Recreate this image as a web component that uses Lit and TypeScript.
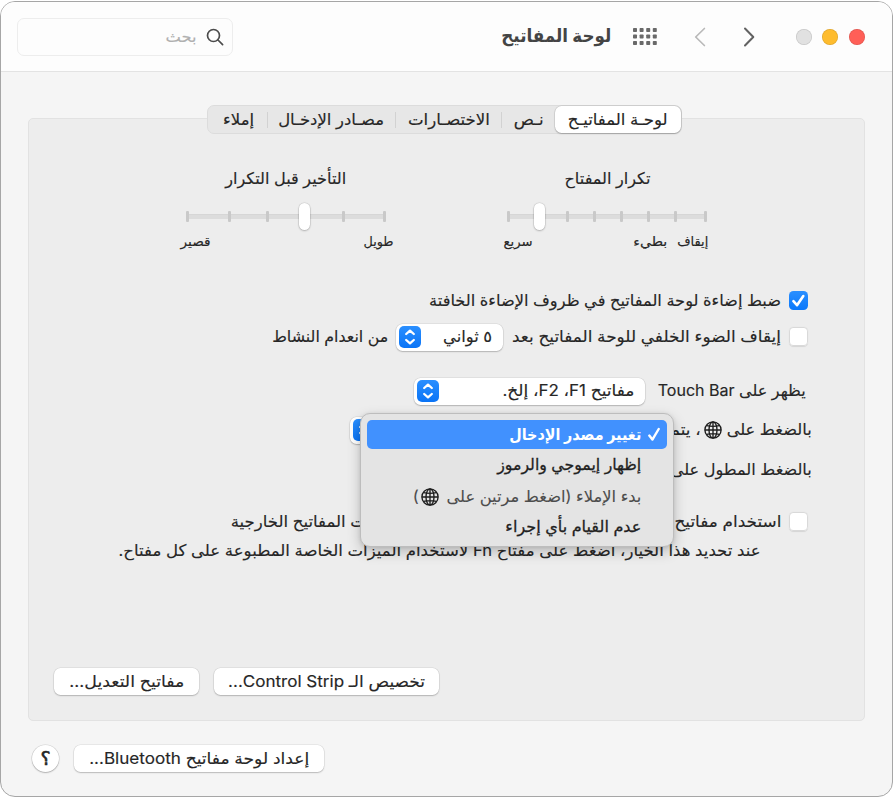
import { LitElement, html, svg, css, nothing } from "lit";
import { customElement, property, query } from "lit/decorators.js";

/** One line of text condensed or widened to a given measure. */
@customElement("fit-text")
class FitText extends LitElement {
  @property({ type: Number }) w = 100;
  @query("span") private line!: HTMLSpanElement;
  static styles = css`
    :host { display: block; flex: none; direction: rtl; padding-bottom: 2px; }
    span { display: inline-block; white-space: nowrap; transform-origin: 100% 50%; }
  `;
  updated() {
    this.style.width = `${this.w}px`;
    this.line.style.transform = "none";
    const natural = this.line.getBoundingClientRect().width;
    if (natural) this.line.style.transform = `scaleX(${this.w / natural})`;
  }
  render() {
    return html`<span><slot></slot></span>`;
  }
}

@customElement("key-slider")
class KeySlider extends LitElement {
  @property({ attribute: false }) ticks: number[] = [];
  @property({ type: Number }) value = 0;
  static styles = css`
    :host { display: block; direction: ltr; }
    .track { position: relative; height: 5px; width: 199px; margin-left: 1px; background: #dcdcdc; box-shadow: inset 0 1px 0 #d6d6d6; }
    .tick { position: absolute; top: -3px; width: 3px; height: 11px; margin-left: -1px; border-radius: 1px; background: #c9c9c9; }
    .thumb { position: absolute; top: -11px; width: 11px; height: 27px; margin-left: -1px; border-radius: 6px; background: #fff; box-shadow: 0 0 1px 0.5px rgba(0,0,0,.14), 0 1px 2px rgba(0,0,0,.2); }
  `;
  render() {
    return html`<div class="track">
      ${this.ticks.map((t) => html`<i class="tick" style="left:${t}px"></i>`)}
      <i class="thumb" style="left:${this.value}px"></i>
    </div>`;
  }
}

@customElement("check-box")
class CheckBox extends LitElement {
  @property({ type: Boolean }) checked = false;
  static styles = css`
    :host { display: block; flex: none; }
    .box { width: 19px; height: 19px; border-radius: 4.5px; background: #fff; box-shadow: inset 0 0 0 1px #d9d9d9, 0 .5px 1px rgba(0,0,0,.1); }
    .on { background: linear-gradient(#2a8fff, #0a78fb); box-shadow: none; }
    svg { display: block; }
  `;
  render() {
    return html`<div class="box ${this.checked ? "on" : ""}">
      ${this.checked
        ? html`<svg width="19" height="19" viewBox="0 0 19 19" fill="none" stroke="#fff" stroke-width="2.6" stroke-linecap="round" stroke-linejoin="round"><path d="M4.4 10.2 8 14.2 14.3 5"/></svg>`
        : nothing}
    </div>`;
  }
}

@customElement("pop-up")
class PopUp extends LitElement {
  static styles = css`
    :host { display: flex; flex: none; box-sizing: border-box; height: 27px; align-items: center; padding: 0 11px 0 3px; border-radius: 6.5px; background: #fff; direction: rtl; box-shadow: 0 0 0 .5px rgba(0,0,0,.1), 0 1px 1.5px rgba(0,0,0,.2); }
    .arrows { width: 22px; height: 22px; flex: none; margin-right: auto; border-radius: 5px; background: linear-gradient(#2a8fff, #0a74f6); }
  `;
  render() {
    return html`<slot></slot>
      <svg class="arrows" viewBox="0 0 22 22" fill="none" stroke="#fff" stroke-width="2.3" stroke-linecap="round" stroke-linejoin="round"><path d="M7.2 8 11 4.7 14.8 8M7.2 14l3.8 3.3 3.8-3.3"/></svg>`;
  }
}

const globe = html`<svg class="globe" width="18" height="18" viewBox="0 0 18 18" fill="none" stroke="currentColor" stroke-width="1.35">
  <circle cx="9" cy="9" r="8.1"/><ellipse cx="9" cy="9" rx="4" ry="8.1"/>
  <path d="M9 .9v16.2M.9 9h16.2M2.6 4.6q6.4 1.6 12.8 0M2.6 13.4q6.4-1.6 12.8 0"/></svg>`;

const dots = [0, 1, 2].flatMap((r) =>
  [0, 1, 2, 3].map((c) => svg`<rect x=${c * 6.6} y=${r * 6.5} width="4" height="4" rx=".8"/>`)
);

@customElement("app-root")
class AppRoot extends LitElement {
  static styles = css`
    :host { display: block; width: 894px; height: 798px; overflow: hidden; background: #fff; padding-top: 1px; box-sizing: border-box; direction: rtl; font: 16px/24px Inter, "DejaVu Sans", sans-serif; color: #262626; -webkit-text-stroke: .15px currentColor; }
    * { box-sizing: border-box; }
    .window { width: 893px; height: 796px; margin-left: auto; margin-right: 1px; border: 1px solid #a6a6a6; border-radius: 15px; background: #f5f5f5; overflow: hidden; direction: rtl; }
    .bar { height: 70px; background: #fdfdfd; border-bottom: 1.5px solid #e3e3e3; display: flex; align-items: center; padding: 0 27px 0 16px; }
    .dot { width: 16px; height: 16px; border-radius: 50%; margin-left: 10.6px; box-shadow: inset 0 0 0 .7px rgba(0,0,0,.12); }
    .red { background: #ff5f57; } .yellow { background: #febc2e; } .grey { background: #e1e1e1; }
    .next { margin-right: 30px; } .prev { margin-right: 37.5px; } .grid { margin: 0 36.5px 0 22px; }
    .title { font-size: 18px; font-weight: 600; color: #444; -webkit-text-stroke: 0; }
    .search { margin-right: auto; width: 216px; height: 38px; border: 1.5px solid #ededed; border-radius: 7px; display: flex; align-items: center; padding-right: 8px; }
    .search fit-text { margin-right: 9px; padding: 0; color: #b0b0b0; font-size: 15px; }
    .tabs { position: relative; z-index: 1; width: 475px; height: 29px; margin: 33px 210px -16px auto; border: 1px solid #dcdcdc; border-radius: 7px; background: #e7e7e7; display: flex; align-items: center; }
    .tab { display: flex; height: 27px; justify-content: center; align-items: center; }
    .tab.on { background: #fff; border-radius: 6.5px; box-shadow: 0 0 0 .5px rgba(0,0,0,.13), 0 1px 1.5px rgba(0,0,0,.22); }
    .sep { width: 1px; height: 16px; background: #d2d2d2; }
    .panel { position: relative; width: 837px; height: 603px; margin: 0 27px 0 auto; border: 1px solid #e2e2e2; border-radius: 5px; background: #ededed; }
    .sliders { display: flex; padding: 47px 155px 0 0; gap: 119px; height: 168px; }
    .sliders fit-text { padding: 0; }
    .sl { width: 202px; }
    .sl .head { display: flex; }
    .sl key-slider { margin-top: 24px; }
    .names { display: flex; margin-top: 10px; font-size: 13px; }
    .row { display: flex; align-items: center; height: 28px; }
    .lit { padding-right: 56px; }
    .row check-box { margin: 0 0 1px 8px; }
    .menu { position: absolute; left: 331px; top: 294px; width: 314px; height: 134px; padding: 6px 6px; border: 1px solid #bdbdbd; border-radius: 10px; background: #e4e4e4; box-shadow: 0 5px 14px rgba(0,0,0,.2), 0 1px 4px rgba(0,0,0,.1); color: #1f1f1f; -webkit-text-stroke: .3px currentColor; }
    .item { display: flex; align-items: center; height: 31px; padding-right: 26px; }
    .item.first { height: 32px; } .item.last { height: 30px; }
    .item.on { height: 29px; padding-right: 7px; border-radius: 5px; background: #4191fe; color: #fff; font-weight: 600; -webkit-text-stroke: 0; }
    .item.dim { color: #4c4c4c; -webkit-text-stroke: .1px currentColor; }
    .globe { flex: none; color: #1c1c1c; }
    .button { height: 27px; border-radius: 6.5px; background: #fff; display: flex; align-items: center; justify-content: center; box-shadow: 0 0 0 .5px rgba(0,0,0,.1), 0 1px 1.5px rgba(0,0,0,.2); }
    .pair { display: flex; gap: 15px; margin: 103px 425px 0 0; }
    .foot { display: flex; align-items: center; gap: 15px; margin: 24px 568px 0 0; }
    .help { width: 27px; height: 27px; border-radius: 50%; background: #fff; display: flex; align-items: center; justify-content: center; font-size: 19px; -webkit-text-stroke: .6px currentColor; box-shadow: 0 0 0 .5px rgba(0,0,0,.14), 0 1px 1.5px rgba(0,0,0,.22); }
  `;

  private t(w: number, text: string, margin = 0) {
    return html`<fit-text w=${w} style="margin-right:${margin}px">${text}</fit-text>`;
  }

  render() {
    return html`<div class="window">
      <header class="bar">
        <i class="dot red"></i><i class="dot yellow"></i><i class="dot grey"></i>
        <svg class="next" width="12" height="20" viewBox="0 0 12 20" fill="none" stroke="#626262" stroke-width="2" stroke-linecap="round" stroke-linejoin="round"><path d="M2 1.5 10.3 10 2 18.5"/></svg>
        <svg class="prev" width="12" height="20" viewBox="0 0 12 20" fill="none" stroke="#b9b9b9" stroke-width="1.7" stroke-linecap="round" stroke-linejoin="round"><path d="M10.4 1.5 1.7 10 10.4 18.5"/></svg>
        <svg class="grid" width="24" height="17" viewBox="0 0 24 17" fill="#696969">${dots}</svg>
        <div class="title">${this.t(110, "لوحة المفاتيح")}</div>
        <div class="search">
          <svg width="18" height="18" viewBox="0 0 18 18" fill="none" stroke="#4c4c4c" stroke-width="1.7" stroke-linecap="round"><circle cx="7.5" cy="7.5" r="6"/><path d="M12 12l4.6 4.6"/></svg>
          <fit-text w="31">بحث</fit-text>
        </div>
      </header>

      <nav class="tabs">
        <div class="tab on" style="width:126px">${this.t(100, "لوحـة المفاتيـح")}</div>
        <div class="tab" style="width:53px">${this.t(30, "نـص")}</div><i class="sep"></i>
        <div class="tab" style="width:105px">${this.t(82, "الاختصـارات")}</div><i class="sep"></i>
        <div class="tab" style="width:127px">${this.t(106, "مصـادر الإدخـال")}</div><i class="sep"></i>
        <div class="tab" style="width:56px">${this.t(31, "إملاء")}</div>
      </nav>

      <section class="panel">
        <div class="sliders">
          <div class="sl">
            <div class="head">${this.t(86, "تكرار المفتاح", 59)}</div>
            <key-slider .ticks=${[0, 59, 86, 113, 140, 167, 197]} .value=${27}></key-slider>
            <div class="names">${this.t(31, "إيقاف", 1)}${this.t(34, "بطيء", 10)}${this.t(29, "سريع", 100)}</div>
          </div>
          <div class="sl">
            <div class="head">${this.t(121, "التأخير قبل التكرار", 42)}</div>
            <key-slider .ticks=${[0, 42, 80, 156, 197]} .value=${113}></key-slider>
            <div class="names">${this.t(30, "طويل", -6)}${this.t(30, "قصير", 153)}</div>
          </div>
        </div>

        <div class="row lit"><check-box checked></check-box>${this.t(352, "ضبط إضاءة لوحة المفاتيح في ظروف الإضاءة الخافتة")}</div>
        <div class="row lit" style="margin-top:8px"><check-box></check-box>${this.t(269, "إيقاف الضوء الخلفي للوحة المفاتيح بعد")}
          <pop-up style="width:107px;margin-right:9px">${this.t(49, "٥ ثواني")}</pop-up>${this.t(116, "من انعدام النشاط", 8)}</div>
        <div class="row" style="margin-top:26px;padding-right:58px">${this.t(148, "يظهر على Touch Bar")}
          <pop-up style="width:231px;margin-right:13px">${this.t(132, "مفاتيح F1،\u200F F2،\u200F إلخ.")}</pop-up></div>
        <div class="row" style="margin-top:11px;padding-right:52px">${this.t(85, "بالضغط على")}
          <span style="width:5px"></span>${globe}${this.t(31, "، يتم", 3)}
          <pop-up style="width:311px;margin-right:9px"></pop-up></div>
        <div class="row" style="margin-top:12px;padding-right:52px">${this.t(141, "بالضغط المطول على")}</div>
        <div class="row lit" style="margin-top:24px"><check-box></check-box>${this.t(107, "استخدام مفاتيح")}${this.t(164, "لوحات المفاتيح الخارجية", 279)}</div>
        <div class="row" style="margin-top:1px;padding-right:103px">${this.t(642, "عند تحديد هذا الخيار، اضغط على مفتاح Fn لاستخدام الميزات الخاصة المطبوعة على كل مفتاح.")}</div>

        <div class="pair">
          <div class="button" style="width:225px">${this.t(197, "تخصيص الـ Control Strip...")}</div>
          <div class="button" style="width:145px">${this.t(115, "مفاتيح التعديل...")}</div>
        </div>

        <div class="menu">
          <div class="item on">
            <svg width="12" height="15" viewBox="0 0 12 15" fill="none" stroke="#fff" stroke-width="2.4" stroke-linecap="round" stroke-linejoin="round"><path d="M1.3 8.6 4.4 12.6 10.7 2"/></svg>
            ${this.t(132, "تغيير مصدر الإدخال", 7)}
          </div>
          <div class="item first">${this.t(144, "إظهار إيموجي والرموز")}</div>
          <div class="item dim">${this.t(195, "بدء الإملاء (اضغط مرتين على")}<span style="width:7px"></span>${globe}${this.t(6, ")", 2)}</div>
          <div class="item last">${this.t(136, "عدم القيام بأي إجراء")}</div>
        </div>
      </section>

      <footer class="foot">
        <div class="button" style="width:250px">${this.t(220, "إعداد لوحة مفاتيح Bluetooth...")}</div>
        <div class="help">؟</div>
      </footer>
    </div>`;
  }
}
